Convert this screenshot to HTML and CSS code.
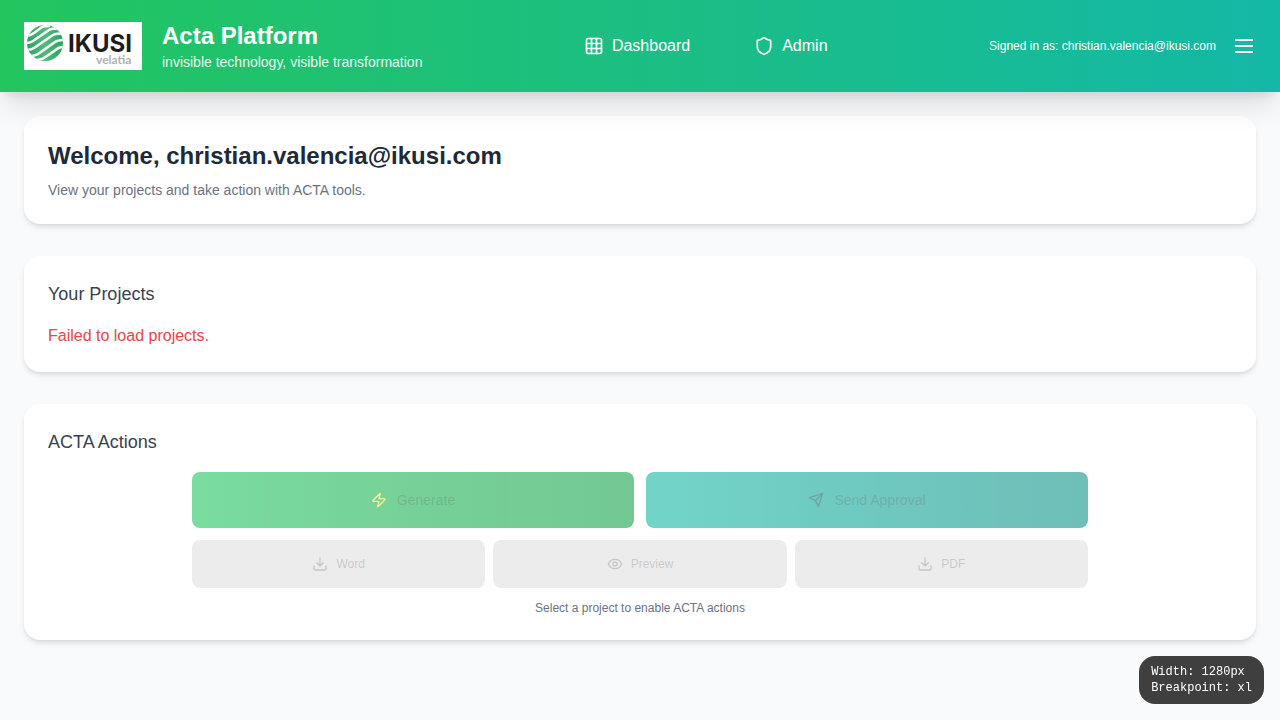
FILE: index.html
```html
<!DOCTYPE html>
<html lang="en">
<head>
<meta charset="utf-8">
<meta name="viewport" content="width=device-width, initial-scale=1">
<title>Acta Platform</title>
<link rel="stylesheet" href="styles.css">
</head>
<body>
<header class="header">
  <div class="brand">
    <svg class="logo" viewBox="0 0 118 48" role="img" aria-label="Ikusi Velatia">
      <defs>
        <clipPath id="globe"><circle cx="21" cy="21" r="18"/></clipPath>
        <linearGradient id="leaf" x1="0" y1="0" x2="1" y2="0">
          <stop offset="0" stop-color="#27a35c"/><stop offset=".5" stop-color="#52bb7d"/><stop offset="1" stop-color="#27a35c"/>
        </linearGradient>
      </defs>
      <rect width="118" height="48" fill="#fff"/>
      <g clip-path="url(#globe)">
        <rect x="3" y="3" width="36" height="36" fill="url(#leaf)"/>
        <g fill="none" stroke="#fff" stroke-width="2.600">
          <path d="M2 14Q6 14 10 11L18 5Q20 4 26 4"/>
          <path d="M2 21Q6 21 9 19L25 8Q28 6 35 7"/>
          <path d="M2 28Q7 28 10 26L29 13Q32 11 40 12"/>
          <path d="M4 34Q11 34 14 32L31 20Q34 18 41 18"/>
          <path d="M12 38Q17 38 20 36L33 27Q35 25 41 25"/>
        </g>
      </g>
      <text class="logo-name" x="44" y="30">IKUSI</text>
      <text class="logo-sub" x="72" y="42">velatia</text>
    </svg>
    <div>
      <div class="brand-title">Acta Platform</div>
      <div class="brand-tagline">invisible technology, visible transformation</div>
    </div>
  </div>
  <nav class="nav">
    <a class="nav-link" href="#dashboard">
      <svg class="icon-md" viewBox="0 0 24 24"><rect x="3" y="3" width="18" height="18" rx="2"/><path d="M3 9h18M3 15h18M9 3v18M15 3v18"/></svg>
      Dashboard
    </a>
    <a class="nav-link" href="#admin">
      <svg class="icon-md" viewBox="0 0 24 24"><path d="M20 13c0 5-3.500 7.500-7.660 8.950a1 1 0 0 1-.67-.01C7.500 20.500 4 18 4 13V6a1 1 0 0 1 1-1c2 0 4.500-1.200 6.240-2.720a1.170 1.170 0 0 1 1.520 0C14.510 3.810 17 5 19 5a1 1 0 0 1 1 1z"/></svg>
      Admin
    </a>
  </nav>
  <div class="account">
    <span>Signed in as: christian.valencia@ikusi.com</span>
    <button class="menu-button" type="button" aria-label="Open menu">
      <svg class="icon-lg" viewBox="0 0 24 24"><path d="M3 6h18M3 12h18M3 18h18"/></svg>
    </button>
  </div>
</header>
<main class="main">
  <section class="card">
    <h1 class="welcome">Welcome, christian.valencia@ikusi.com</h1>
    <p class="lead">View your projects and take action with ACTA tools.</p>
  </section>
  <section class="card">
    <h2 class="card-title">Your Projects</h2>
    <p class="error">Failed to load projects.</p>
  </section>
  <section class="card">
    <h2 class="card-title">ACTA Actions</h2>
    <div class="actions">
      <div class="primary-row">
        <button class="button button-primary button-generate" type="button" disabled>
          <svg class="icon-sm icon-bolt" viewBox="0 0 24 24"><path d="M4 14a1 1 0 0 1-.78-1.63l9.9-10.2a.5.5 0 0 1 .86.46l-1.92 6.02A1 1 0 0 0 13 10h7a1 1 0 0 1 .78 1.63l-9.9 10.2a.5.5 0 0 1-.86-.46l1.92-6.02A1 1 0 0 0 11 14z"/></svg>
          Generate
        </button>
        <button class="button button-primary button-send" type="button" disabled>
          <svg class="icon-sm icon-send" viewBox="0 0 24 24"><path d="M22 2 11 13M22 2 15.500 22 11 13 2 8.500z"/></svg>
          Send Approval
        </button>
      </div>
      <div class="secondary-row">
        <button class="button button-secondary" type="button" disabled>
          <svg class="icon-sm" viewBox="0 0 24 24"><path d="M21 15v4a2 2 0 0 1-2 2H5a2 2 0 0 1-2-2v-4M7 10l5 5 5-5M12 15V3"/></svg>
          Word
        </button>
        <button class="button button-secondary" type="button" disabled>
          <svg class="icon-sm" viewBox="0 0 24 24"><path d="M2 12C4 7 8 5 12 5s8 2 10 7c-2 5-6 7-10 7S4 17 2 12z"/><circle cx="12" cy="12" r="3"/></svg>
          Preview
        </button>
        <button class="button button-secondary" type="button" disabled>
          <svg class="icon-sm" viewBox="0 0 24 24"><path d="M21 15v4a2 2 0 0 1-2 2H5a2 2 0 0 1-2-2v-4M7 10l5 5 5-5M12 15V3"/></svg>
          PDF
        </button>
      </div>
      <p class="hint">Select a project to enable ACTA actions</p>
    </div>
  </section>
</main>
<aside class="debug">
  <div>Width: 1280px</div>
  <div>Breakpoint: xl</div>
</aside>
</body>
</html>
```
FILE: styles.css
```css
* { box-sizing: border-box; }
body {
  margin: 0;
  min-height: 100vh;
  background: #f9fafb;
  color: #1f2937;
  font-family: "Liberation Sans", Arial, sans-serif;
  font-size: 16px;
  line-height: 24px;
}
h1, h2, p { margin: 0; }
svg { display: block; flex-shrink: 0; }
.icon-sm, .icon-md, .icon-lg {
  fill: none;
  stroke: currentColor;
  stroke-width: 2;
  stroke-linecap: round;
  stroke-linejoin: round;
}
.icon-sm { width: 16px; height: 16px; }
.icon-md { width: 20px; height: 20px; }
.icon-lg { width: 24px; height: 24px; stroke-linecap: butt; }

.header {
  position: relative;
  z-index: 1;
  display: flex;
  align-items: center;
  justify-content: space-between;
  padding: 20px 24px;
  background: linear-gradient(to right, #22c55e, #14b8a6);
  box-shadow: 0 20px 25px -5px rgba(0, 0, 0, 0.1), 0 8px 10px -6px rgba(0, 0, 0, 0.1);
  color: #fff;
}
.brand { display: flex; align-items: center; gap: 20px; }
.logo { width: 118px; height: 48px; }
.logo-name { font: bold 24px Inter, sans-serif; fill: #1d1d1b; }
.logo-sub { font: bold 12px Lato, sans-serif; fill: #b0b0b0; }
.brand-title { font-size: 24px; font-weight: bold; line-height: 32px; }
.brand-tagline { font-size: 14px; line-height: 20px; opacity: 0.9; }
.nav { display: flex; gap: 64px; }
.nav-link {
  display: flex;
  align-items: center;
  gap: 8px;
  color: inherit;
  text-decoration: none;
}
.account {
  display: flex;
  align-items: center;
  gap: 16px;
  font-size: 12px;
  line-height: 16px;
}
.menu-button { padding: 0; border: 0; background: none; color: inherit; }

.main { display: flex; flex-direction: column; gap: 32px; padding: 24px; }
.card {
  padding: 24px;
  border-radius: 16px;
  background: #fff;
  box-shadow: 0 4px 6px -1px rgba(0, 0, 0, 0.1), 0 2px 4px -2px rgba(0, 0, 0, 0.1);
}
.welcome { margin-bottom: 8px; font-size: 24px; line-height: 32px; }
.lead { color: #6b7280; font-size: 14px; line-height: 20px; }
.card-title {
  margin-bottom: 16px;
  color: #374151;
  font-size: 18px;
  font-weight: normal;
  line-height: 28px;
}
.error { color: #ef4444; }

.actions {
  display: flex;
  flex-direction: column;
  gap: 12px;
  max-width: 896px;
  margin: 0 auto;
}
.primary-row { display: grid; grid-template-columns: repeat(2, 1fr); gap: 12px; }
.secondary-row { display: grid; grid-template-columns: repeat(3, 1fr); gap: 8px; }
.button {
  display: flex;
  align-items: center;
  justify-content: center;
  border: 0;
  border-radius: 8px;
  font-family: inherit;
  opacity: 0.6;
}
.button-primary { gap: 10px; height: 56px; color: rgba(16, 16, 16, 0.3); font-size: 14px; }
.button-generate { background: linear-gradient(to right, #22c55e, #16a34a); }
.button-send { background: linear-gradient(to right, #14b8a6, #0d9488); }
.button-secondary { gap: 8px; height: 48px; background: #e0e0e0; color: rgba(16, 16, 16, 0.3); font-size: 12px; }
.icon-bolt { color: #fde047; }
.icon-send { color: rgba(16, 16, 16, 0.4); }
.hint { color: #6b7280; font-size: 12px; line-height: 16px; text-align: center; }

.debug {
  position: fixed;
  right: 16px;
  bottom: 16px;
  z-index: 2;
  padding: 8px 12px;
  border-radius: 16px;
  background: rgba(0, 0, 0, 0.75);
  color: #fff;
  font-family: "Liberation Mono", monospace;
  font-size: 12px;
  line-height: 16px;
}
```
